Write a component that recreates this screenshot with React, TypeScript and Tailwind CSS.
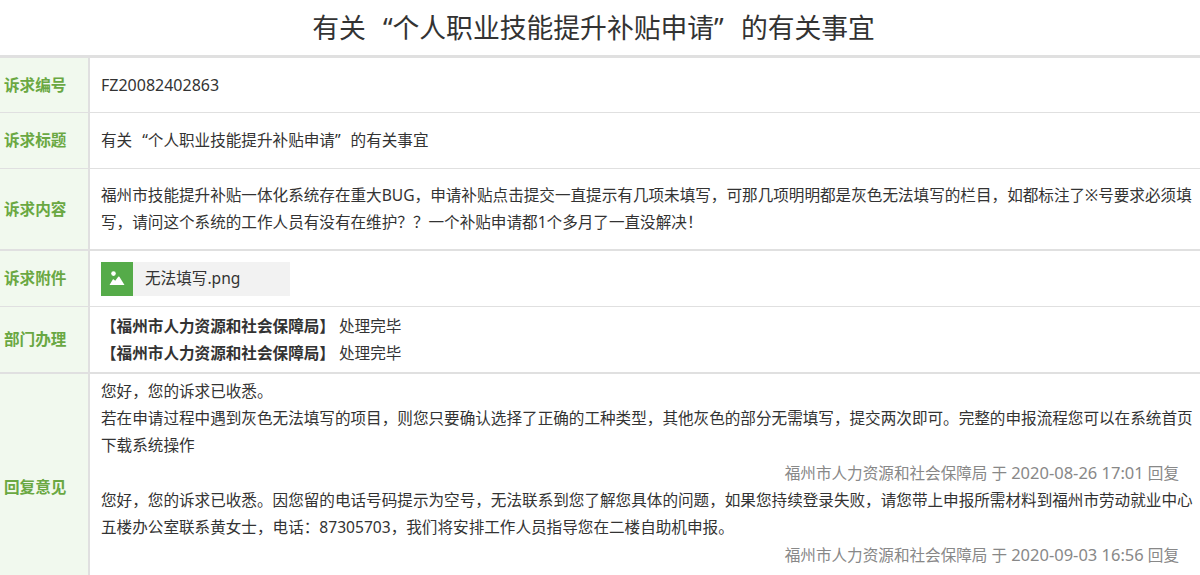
const FONT = '"Noto Sans", "Noto Sans CJK SC", sans-serif';

function Row({ label, className, children }: { label: string; className: string; children: React.ReactNode }) {
  return (
    <div className={`flex ${className}`}>
      <div className="w-[90px] shrink-0 flex items-center bg-[#f1f9ee] border-r-2 border-[#e0e0e0] pl-[4px] font-bold text-[#6aa842]">
        {label}
      </div>
      <div className="flex-1 min-w-0 pl-[11px] pr-[6px] flex flex-col justify-center">{children}</div>
    </div>
  );
}

// fullwidth quotes, the latin font's own are too narrow
const Open = () => <span className="inline-block w-[1em] text-right">“</span>;
const Close = () => <span className="inline-block w-[1em] text-left">”</span>;

function Signed({ date }: { date: string }) {
  return (
    <p className="text-right pr-[15px] text-[#888]">
      福州市人力资源和社会保障局 于 <span className="text-[16.5px]">{date}</span> 回复
    </p>
  );
}

const DEPT = '【福州市人力资源和社会保障局】';

export default function App() {
  return (
    <div className="w-[1200px] h-[575px] overflow-hidden bg-white text-[15.6px] leading-[27px] text-[#333]" style={{ fontFamily: FONT }}>
      <h1 className="h-[58px] flex items-center justify-center pr-[13px] border-b-[3px] border-[#e0e0e0] text-[26.8px] font-normal text-[#333]">
        <span>有关<Open />个人职业技能提升补贴申请<Close />的有关事宜</span>
      </h1>
      <Row label="诉求编号" className="h-[55px] border-b border-[#e0e0e0]">
        <p className="text-[16px]">FZ20082402863</p>
      </Row>
      <Row label="诉求标题" className="h-[56px] border-b border-[#e0e0e0]">
        <p>有关<Open />个人职业技能提升补贴申请<Close />的有关事宜</p>
      </Row>
      <Row label="诉求内容" className="h-[82px] border-b-2 border-[#e0e0e0]">
        <p>福州市技能提升补贴一体化系统存在重大BUG，申请补贴点击提交一直提示有几项未填写，可那几项明明都是灰色无法填写的栏目，如都标注了※号要求必须填写，请问这个系统的工作人员有没有在维护？？一个补贴申请都1个多月了一直没解决！</p>
      </Row>
      <Row label="诉求附件" className="h-[56px] border-b border-[#e0e0e0]">
        <div className="w-[189px] h-[34px] flex items-center bg-[#f2f2f2]">
          <div className="w-[32px] h-[34px] flex items-center justify-center bg-[#55ab49]">
            <svg viewBox="0 0 16 16" className="w-[16px] h-[16px]" fill="#fff">
              <circle cx="4.5" cy="2.6" r="2.3" />
              <path d="M0.5 14 L3.8 8.6 Q4.2 8 4.8 8.5 L6.2 9.8 L9.2 5.8 Q9.8 5.1 10.4 5.8 L15.5 14 Z" />
            </svg>
          </div>
          <span className="ml-[12px]">无法填写.png</span>
        </div>
      </Row>
      <Row label="部门办理" className="h-[67px] border-b-2 border-[#e0e0e0]">
        <p><b className="font-bold">{DEPT}</b> 处理完毕</p>
        <p><b className="font-bold">{DEPT}</b> 处理完毕</p>
      </Row>
      <Row label="回复意见" className="h-[226px]">
        <div className="self-stretch h-full pt-[4px]">
          <p>您好，您的诉求已收悉。</p>
          <p>若在申请过程中遇到灰色无法填写的项目，则您只要确认选择了正确的工种类型，其他灰色的部分无需填写，提交两次即可。完整的申报流程您可以在系统首页下载系统操作</p>
          <Signed date="2020-08-26 17:01" />
          <p>您好，您的诉求已收悉。因您留的电话号码提示为空号，无法联系到您了解您具体的问题，如果您持续登录失败，请您带上申报所需材料到福州市劳动就业中心五楼办公室联系黄女士，电话：87305703，我们将安排工作人员指导您在二楼自助机申报。</p>
          <Signed date="2020-09-03 16:56" />
        </div>
      </Row>
    </div>
  );
}
